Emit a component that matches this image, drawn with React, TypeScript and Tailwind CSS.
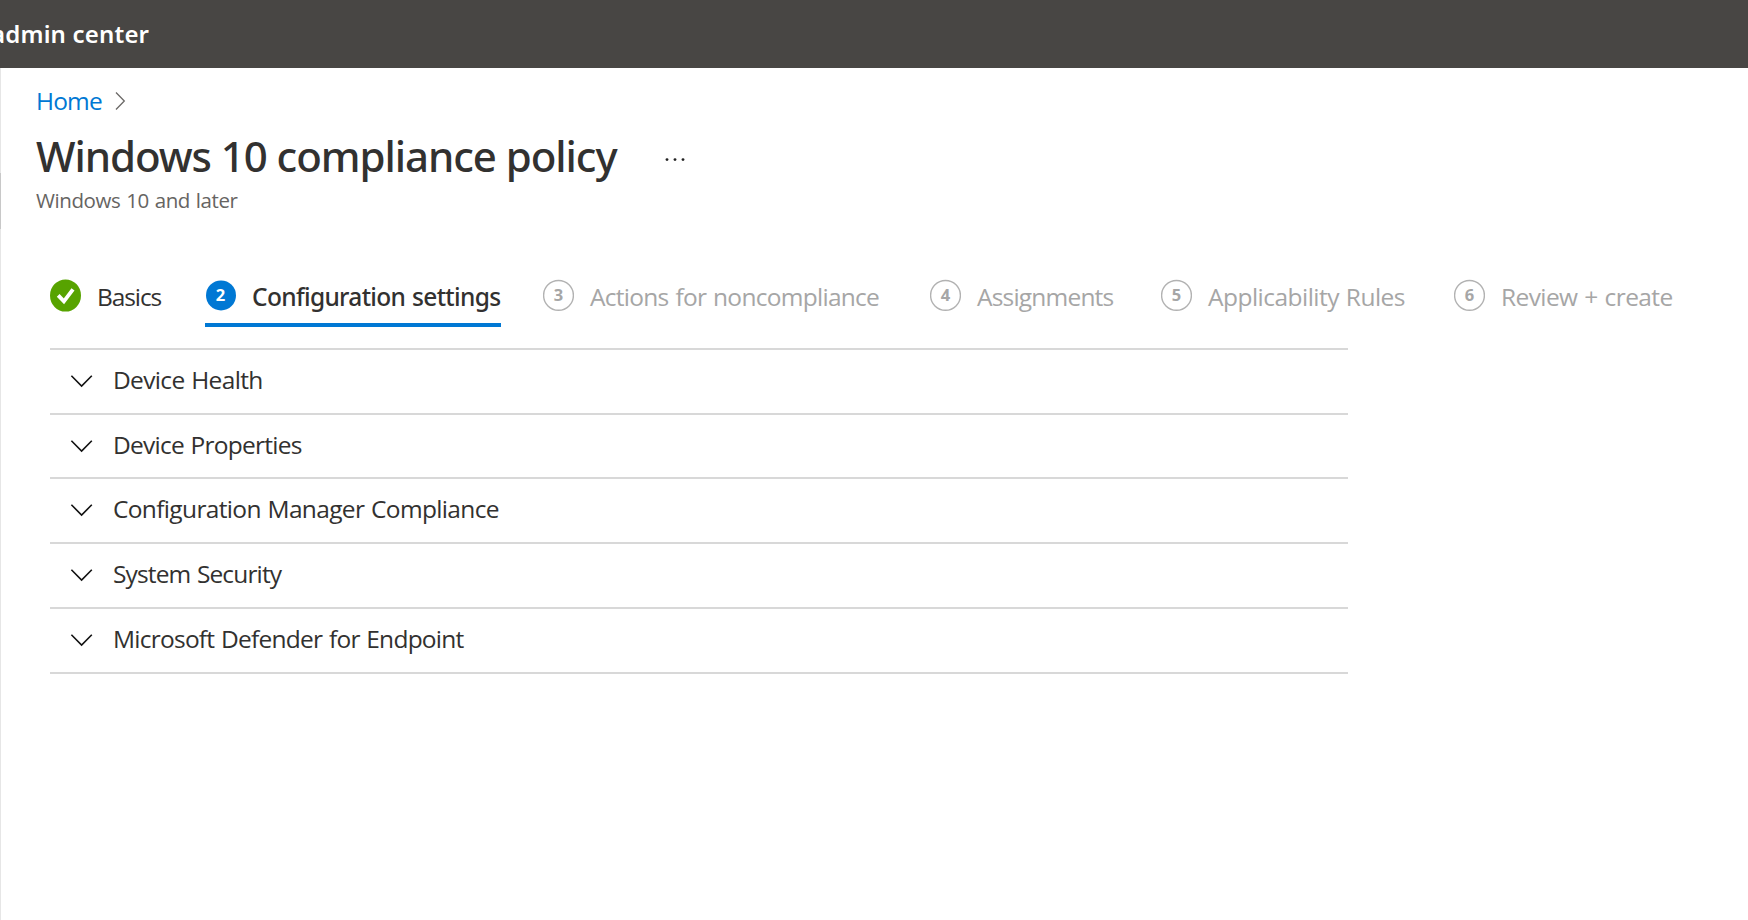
type Step = { label: string; width: string; tracking: string; state: "done" | "active" | "todo" };

const steps: Step[] = [
  { label: "Basics", width: "w-[155px]", tracking: "tracking-[-1.1px]", state: "done" },
  { label: "Configuration settings", width: "w-[338px]", tracking: "tracking-[-0.67px] [word-spacing:1px]", state: "active" },
  { label: "Actions for noncompliance", width: "w-[387px]", tracking: "tracking-[-0.72px] [word-spacing:1.2px]", state: "todo" },
  { label: "Assignments", width: "w-[231px]", tracking: "tracking-[-0.8px]", state: "todo" },
  { label: "Applicability Rules", width: "w-[293px]", tracking: "tracking-[-0.52px] [word-spacing:1px]", state: "todo" },
  { label: "Review + create", width: "w-[240px]", tracking: "tracking-[-0.6px] [word-spacing:1.1px]", state: "todo" },
];

const sections = [
  { label: "Device Health", height: "h-[65px]", tracking: "tracking-[-0.66px] [word-spacing:1px]" },
  { label: "Device Properties", height: "h-[64px]", tracking: "tracking-[-0.75px] [word-spacing:1px]" },
  { label: "Configuration Manager Compliance", height: "h-[65px]", tracking: "tracking-[-0.65px] [word-spacing:1px]" },
  { label: "System Security", height: "h-[65px]", tracking: "tracking-[-0.86px] [word-spacing:1px]" },
  { label: "Microsoft Defender for Endpoint", height: "h-[65px]", tracking: "tracking-[-0.75px] [word-spacing:1px]" },
];

function StepBadge({ state, number }: { state: Step["state"]; number: number }) {
  if (state === "done") {
    return (
      <svg width="31" height="33" viewBox="0 0 31 33" className="shrink-0">
        <ellipse cx="15.5" cy="16.5" rx="15.5" ry="16.1" fill="#57a300" />
        <path d="M8.2 16.4 L13.9 22.4 L23 10.4" fill="none" stroke="#fff" strokeWidth="3.8" />
      </svg>
    );
  }
  const active = state === "active";
  return (
    <span className="grid h-[33px] w-[31px] shrink-0 place-items-center">
      <svg width="31" height="33" viewBox="0 0 31 33" className="col-start-1 row-start-1">
        <circle
          cx={active ? 16 : 15.5}
          cy={active ? 16.4 : 16.4}
          r={active ? 15 : 14.9}
          fill={active ? "#0078d4" : "#fff"}
          stroke={active ? "none" : "#b2b2b2"}
          strokeWidth="1.4"
        />
      </svg>
      <span
        className={`col-start-1 row-start-1 pb-px font-['Open_Sans',sans-serif] text-[16.5px] leading-5 font-bold ${active ? "text-white" : "text-[#a6a6a6]"}`}
      >
        {number}
      </span>
    </span>
  );
}

function StepTab({ step, number }: { step: Step; number: number }) {
  const active = step.state === "active";
  const color = step.state === "todo" ? "text-[#a6a6a6]" : "text-[#323130]";
  const font = active ? "font-['Noto_Sans',sans-serif] font-medium" : "font-['Open_Sans',sans-serif]";
  return (
    <li className={`shrink-0 ${step.width}`}>
      <div
        className={`flex h-[48px] items-start gap-4 ${active ? "w-[296px] border-b-4 border-[#0078d4]" : ""}`}
      >
        <StepBadge state={step.state} number={number} />
        <span className={`pt-px text-[24.5px] leading-[34px] whitespace-nowrap ${font} ${color} ${step.tracking}`}>
          {step.label}
        </span>
      </div>
    </li>
  );
}

export default function App() {
  return (
    <div className="flex h-[920px] w-[1748px] flex-col overflow-hidden bg-white font-['Open_Sans',sans-serif] text-[#323130]">
      <header className="flex h-[68px] shrink-0 items-center overflow-hidden bg-[#484644]">
        <span className="ml-[-9px] pb-px font-['Noto_Sans',sans-serif] text-[24px] leading-[34px] font-semibold tracking-[0.18px] whitespace-nowrap text-white">
          admin center
        </span>
      </header>
      <div className="flex flex-1">
        <div className="flex w-px flex-col bg-[#e6e6e6] pt-[105px]">
          <div className="h-14 bg-[#c8c8c8]" />
        </div>
        <main className="flex-1">
          <nav className="flex h-[33px] pt-4 pl-[35px]">
            <a className="text-[24.5px] leading-[34px] tracking-[-0.85px] text-[#0078d4]">Home</a>
            <svg width="12" height="20" viewBox="0 0 12 20" className="mt-[7px] ml-[13px]">
              <path d="M1 1.5 L9.3 10 L1 18.5" fill="none" stroke="#6b6967" strokeWidth="1.3" />
            </svg>
          </nav>
          <div className="flex h-[76px] items-start pt-[25px] pl-[35px]">
            <h1 className="font-['Noto_Sans',sans-serif] text-[42px] leading-[60px] font-medium tracking-[-1.06px] whitespace-nowrap">
              Windows 10 compliance policy
            </h1>
            <svg width="22" height="6" viewBox="0 0 22 6" className="mt-[31px] ml-[47px]">
              <circle cx="3" cy="2.6" r="1.4" fill="#222" />
              <circle cx="11" cy="2.6" r="1.4" fill="#222" />
              <circle cx="19" cy="2.6" r="1.4" fill="#222" />
            </svg>
          </div>
          <p className="mt-[9px] pl-[35px] text-[20.5px] leading-7 tracking-[-0.4px] text-[#666462] [word-spacing:0.9px]">
            Windows 10 and later
          </p>
          <ol className="mt-[65px] flex h-[48px] pl-[49px]">
            {steps.map((step, i) => (
              <StepTab key={step.label} step={step} number={i + 1} />
            ))}
          </ol>
          <div className="mt-[21px] ml-[49px] w-[1298px] border-t-2 border-[#d8d8d8]">
            {sections.map((s) => (
              <div key={s.label} className={`flex items-start border-b-2 border-[#d8d8d8] pl-5 ${s.height}`}>
                <svg width="24" height="14" viewBox="0 0 24 14" className="mt-6">
                  <path d="M1.4 1.8 L11.6 12 L21.8 1.8" fill="none" stroke="#111" strokeWidth="1.6" />
                </svg>
                <span className={`mt-[13px] ml-[19px] text-[24.5px] leading-[34px] ${s.tracking}`}>{s.label}</span>
              </div>
            ))}
          </div>
        </main>
      </div>
    </div>
  );
}
